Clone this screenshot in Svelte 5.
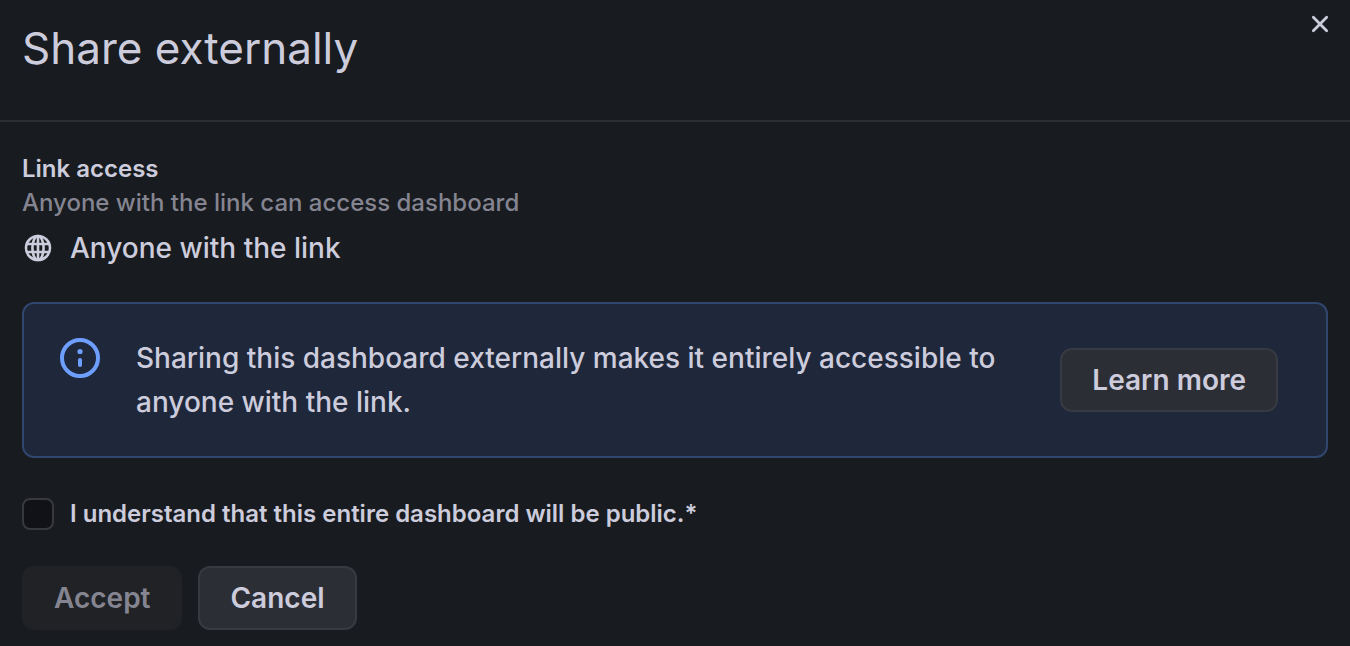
<script>
	let { onClose = () => {}, onAccept = () => {} } = $props();

	let acknowledged = $state(false);
</script>

<section class="drawer" aria-labelledby="drawer-title">
	<header class="header">
		<h1 id="drawer-title">Share externally</h1>
		<button class="close" aria-label="Close" onclick={onClose}>
			<svg viewBox="0 0 24 24" width="32" height="32" fill="none" stroke="currentColor" stroke-width="2.1" stroke-linecap="round">
				<path d="M7 7l10 10M17 7l-10 10" />
			</svg>
		</button>
	</header>

	<div class="body">
		<div class="access">
			<h2>Link access</h2>
			<p class="description">Anyone with the link can access dashboard</p>
			<div class="scope">
				<svg viewBox="0 0 32 32" width="32" height="32" fill="none" stroke="currentColor" stroke-width="2.6">
					<circle cx="16" cy="16" r="12" />
					<ellipse cx="16" cy="16" rx="5.6" ry="12" />
					<path d="M16 4v24M4.8 12h22.4M4.8 20h22.4" />
				</svg>
				<span>Anyone with the link</span>
			</div>
		</div>

		<div class="alert" role="status">
			<svg class="info" viewBox="0 2 48 44" width="48" height="44" fill="none" stroke="currentColor" stroke-width="4" stroke-linecap="round">
				<circle cx="24" cy="24" r="18" />
				<path d="M24 26v5" />
				<circle cx="24" cy="17.5" r="2.6" fill="currentColor" stroke="none" />
			</svg>
			<p>Sharing this dashboard externally makes it entirely accessible to anyone with the link.</p>
			<button class="btn learn">Learn more</button>
		</div>

		<form onsubmit={(e) => { e.preventDefault(); onAccept(); }}>
			<label class="check">
				<input type="checkbox" bind:checked={acknowledged} />
				<span>I understand that this entire dashboard will be public.*</span>
			</label>
			<div class="actions">
				<button class="btn" type="submit" disabled={!acknowledged}>Accept</button>
				<button class="btn" type="button" onclick={onClose}>Cancel</button>
			</div>
		</form>
	</div>
</section>

<style>
	:global(body) {
		margin: 0;
		background: #181b1f;
	}

	.drawer {
		color: #ccccdc;
		font-family: Inter, "Liberation Sans", sans-serif;
		font-size: 28px;
		font-weight: 500;
		line-height: 44px;
	}

	h1, h2, p {
		margin: 0;
	}

	svg {
		flex: none;
		display: block;
	}

	.header {
		display: flex;
		justify-content: space-between;
		align-items: flex-start;
		padding: 8px 14px 42px 22px;
		border-bottom: 2px solid #2c2e33;
	}

	h1 {
		padding-top: 10px;
		font-size: 44px;
		font-weight: 400;
		line-height: 60px;
	}

	.close {
		padding: 0;
		border: none;
		background: none;
		color: inherit;
		cursor: pointer;
	}

	.body {
		padding: 30px 22px 16px;
	}

	h2, .description {
		font-size: 24px;
		line-height: 34px;
	}

	h2 {
		font-weight: 600;
	}

	.description {
		color: #858592;
	}

	.scope {
		display: flex;
		align-items: center;
		gap: 16px;
		padding-top: 6px;
	}

	.alert {
		display: flex;
		align-items: center;
		gap: 32px;
		margin-top: 32px;
		padding: 32px 48px 32px 32px;
		border: 2px solid #30466f;
		border-radius: 12px;
		background: #1f273a;
	}

	.info {
		align-self: flex-start;
		color: #6e9fff;
	}

	.alert p {
		flex: 1;
	}

	.btn {
		height: 64px;
		padding: 0 30px;
		border: 2px solid #383a41;
		border-radius: 12px;
		background: #2c2e36;
		color: inherit;
		font: inherit;
		font-weight: 600;
		cursor: pointer;
	}

	.learn {
		margin-left: 16px;
	}

	.btn:disabled {
		border-color: #202226;
		background: #202226;
		color: #858592;
		cursor: not-allowed;
	}

	.check {
		display: flex;
		align-items: center;
		gap: 16px;
		width: fit-content;
		margin-top: 40px;
		font-size: 24px;
		font-weight: 600;
		line-height: 32px;
	}

	.check input {
		appearance: none;
		width: 32px;
		height: 32px;
		margin: 0;
		border: 2px solid #38393f;
		border-radius: 8px;
		background: #111217;
	}

	.check input:checked {
		background: #3d71d9;
	}

	.actions {
		display: flex;
		gap: 16px;
		margin-top: 36px;
	}
</style>
